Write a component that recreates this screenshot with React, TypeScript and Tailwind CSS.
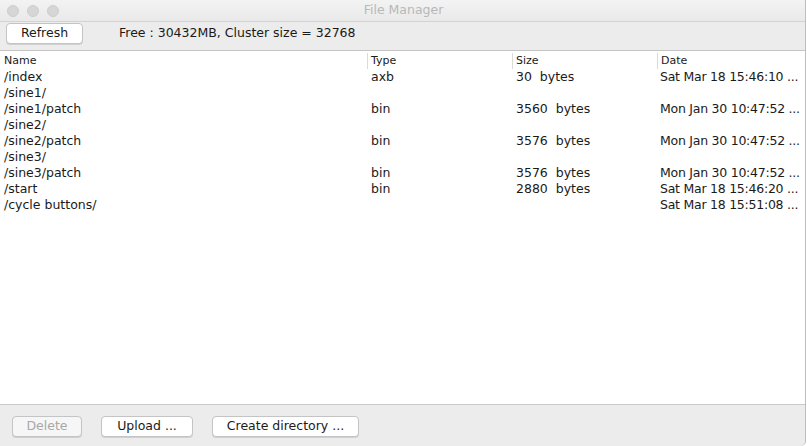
import React from 'react'

interface FileRow {
  name: string;
  type?: string;
  size?: string;
  date?: string;
}

const rows: FileRow[] = [
  { name: "/index", type: "axb", size: "30  bytes", date: "Sat Mar 18 15:46:10 ..." },
  { name: "/sine1/" },
  { name: "/sine1/patch", type: "bin", size: "3560  bytes", date: "Mon Jan 30 10:47:52 ..." },
  { name: "/sine2/" },
  { name: "/sine2/patch", type: "bin", size: "3576  bytes", date: "Mon Jan 30 10:47:52 ..." },
  { name: "/sine3/" },
  { name: "/sine3/patch", type: "bin", size: "3576  bytes", date: "Mon Jan 30 10:47:52 ..." },
  { name: "/start", type: "bin", size: "2880  bytes", date: "Sat Mar 18 15:46:20 ..." },
  { name: "/cycle buttons/", date: "Sat Mar 18 15:51:08 ..." },
]

function MacButton({ label, disabled, className }: { label: string; disabled?: boolean; className: string }) {
  return (
    <button
      className={`h-[21px] rounded-[4px] border border-[#c4c4c4] text-[12.5px] leading-none shadow-[0_1px_0_#d0d0d0] ${disabled ? "text-[#a8a8a8] bg-[#f6f6f6]" : "text-[#1a1a1a] bg-white"} ${className}`}
    >
      {label}
    </button>
  )
}

export default function App() {
  return (
    <div className="w-[807px] h-[446px] bg-white font-['DejaVu_Sans',sans-serif]">
      <div className="w-[806px] h-[446px] flex flex-col bg-[#ececec] border-r border-[#bdbdbd] rounded-br-[5px] overflow-hidden">
        {/* title bar */}
        <div className="h-[22px] flex items-center relative bg-gradient-to-b from-[#f3f3f3] to-[#e9e9e9] border-b border-[#d3d3d3]">
          <div className="flex gap-[8px] pl-[7px]">
            <div className="w-[12px] h-[12px] rounded-full bg-[#d6d6d6] border border-[#cdcdcd]" />
            <div className="w-[12px] h-[12px] rounded-full bg-[#d6d6d6] border border-[#cdcdcd]" />
            <div className="w-[12px] h-[12px] rounded-full bg-[#d6d6d6] border border-[#cdcdcd]" />
          </div>
          <div className="absolute inset-0 flex items-center justify-center text-[12.5px] text-[#b8b8b8] pl-[2px]">
            File Manager
          </div>
        </div>

        {/* toolbar */}
        <div className="h-[29px] flex items-start pt-[1px] pl-[6px] border-b border-[#c5c5c5]">
          <MacButton label="Refresh" className="w-[77px]" />
          <span className="ml-[36px] mt-[1px] text-[12.5px] text-[#1a1a1a]">Free : 30432MB, Cluster size = 32768</span>
        </div>

        {/* table */}
        <div className="flex-1 bg-white border-b border-[#c9c9c9] text-[12.5px] text-[#1a1a1a]">
          <div className="h-[16px] mt-[2px] grid grid-cols-[367px_145px_145px_1fr] text-[11px] leading-[16px]">
            <div className="pl-[4px]">Name</div>
            <div className="pl-[3px] border-l border-[#dadada]">Type</div>
            <div className="pl-[3px] border-l border-[#dadada]">Size</div>
            <div className="pl-[3px] border-l border-[#dadada]">Date</div>
          </div>
          {rows.map((r, i) => (
            <div key={i} className="h-[16px] grid grid-cols-[367px_145px_145px_1fr] leading-[16px] whitespace-pre">
              <div className="pl-[4px]">{r.name}</div>
              <div className="pl-[4px]">{r.type}</div>
              <div className="pl-[4px]">{r.size}</div>
              <div className="pl-[3px] overflow-hidden tracking-[-0.25px]">{r.date}</div>
            </div>
          ))}
        </div>

        {/* bottom buttons */}
        <div className="h-[41px] flex items-start pt-[11px] pl-[12px] gap-[19px]">
          <MacButton label="Delete" disabled className="w-[70px]" />
          <MacButton label="Upload ..." className="w-[92px]" />
          <MacButton label="Create directory ..." className="w-[147px]" />
        </div>
      </div>
    </div>
  )
}
